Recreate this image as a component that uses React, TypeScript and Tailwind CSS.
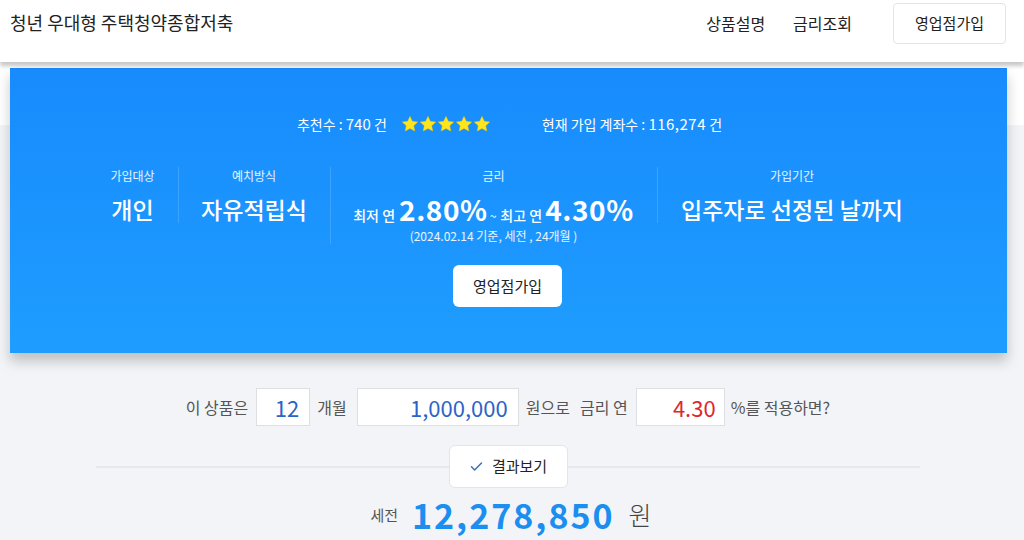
import React from "react";

function Star() {
  return (
    <svg viewBox="0 0 24 24" className="w-[18px] h-[18px]">
      <path
        d="M12 1.8l3.1 6.6 7.2.9-5.3 5 1.4 7.1L12 17.9l-6.4 3.5L7 14.3l-5.3-5 7.2-.9z"
        fill="#ffe61c"
        stroke="#f2c200"
        strokeWidth="0.6"
      />
    </svg>
  );
}

function App() {
  return (
    <div className="min-h-screen bg-[linear-gradient(to_bottom,#ffffff_125px,#f2f4f7_125px)] font-['Noto_Sans_CJK_KR','Noto_Sans',sans-serif] overflow-hidden">
      <header className="relative z-10 h-[62px] bg-white shadow-[0_4px_4px_rgba(0,0,0,0.22)]">
        <div className="flex items-center justify-between h-[45px] pl-[10px] pr-[18px]">
          <h1 className="text-[18px] text-[#222]">청년 우대형 주택청약종합저축</h1>
          <nav className="flex items-center">
            <a className="text-[16px] text-[#222] mr-[28px]">상품설명</a>
            <a className="text-[16px] text-[#222] mr-[41px]">금리조회</a>
            <button className="h-[41px] w-[113px] mt-[1px] border border-[#e4e4e4] rounded bg-white text-[15px] text-[#222]">
              영업점가입
            </button>
          </nav>
        </div>
      </header>

      <section className="ml-[10px] mt-[6px] w-[997px] bg-gradient-to-b from-[#188bfd] to-[#1f9dff] pt-[46px] pb-[46px] text-white shadow-[0_8px_12px_rgba(0,0,0,0.22)]">
        <div className="flex items-center justify-center h-[20px] text-[14px] pl-[2px]">
          <span>
            추천수 : <span className="text-[15px]">740</span> 건
          </span>
          <span className="flex ml-[14px]">
            <Star />
            <Star />
            <Star />
            <Star />
            <Star />
          </span>
          <span className="ml-[51px]">
            현재 가입 계좌수 : <span className="text-[15px] tracking-[0.5px]">116,274</span> 건
          </span>
        </div>

        <div className="flex justify-center mt-[33px] pr-[3px]">
          <div className="w-[90px] flex flex-col items-center">
            <span className="text-[12px] leading-[18px] text-white/90">가입대상</span>
            <span className="text-[23px] leading-[28px] font-medium mt-[10px]">개인</span>
          </div>
          <div className="w-[152px] flex flex-col items-center border-l border-white/15 h-[56px]">
            <span className="text-[12px] leading-[18px] text-white/90">예치방식</span>
            <span className="text-[23px] leading-[28px] font-medium mt-[10px]">자유적립식</span>
          </div>
          <div className="w-[327px] flex flex-col items-center border-l border-white/15">
            <span className="text-[12px] leading-[18px] text-white/90">금리</span>
            <div className="flex items-baseline h-[28px] mt-[10px] leading-[28px]">
              <span className="text-[14px] font-medium">최저 연</span>
              <span className="text-[28px] font-bold ml-[4px] tracking-[0.6px]">2.80%</span>
              <span className="text-[12px] ml-[2px]">~</span>
              <span className="text-[14px] font-medium ml-[4px]">최고 연</span>
              <span className="text-[28px] font-bold ml-[3px] tracking-[0.6px]">4.30%</span>
            </div>
            <span className="text-[12px] leading-[16px] mt-[5px] text-white/90">
              (2024.02.14 기준, 세전 , 24개월 )
            </span>
          </div>
          <div className="w-[270px] flex flex-col items-center border-l border-white/15 h-[56px]">
            <span className="text-[12px] leading-[18px] text-white/90">가입기간</span>
            <span className="text-[23px] leading-[28px] font-medium mt-[10px]">입주자로 선정된 날까지</span>
          </div>
        </div>

        <div className="flex justify-center mt-[21px] pr-[2px]">
          <button className="h-[42px] w-[109px] rounded-md bg-white text-[15px] text-[#222]">
            영업점가입
          </button>
        </div>
      </section>

      <div className="flex items-center justify-center mt-[35px] text-[16px] text-[#555] pr-[8px]">
        <span>이 상품은</span>
        <div className="ml-[8px] w-[54px] h-[38px] bg-white border border-[#dddfe3] flex items-center justify-end pr-[10px] text-[22px] text-[#2c63c6]">
          12
        </div>
        <span className="ml-[7px]">개월</span>
        <div className="ml-[10px] w-[162px] h-[38px] bg-white border border-[#dddfe3] flex items-center justify-end pr-[10px] text-[22px] text-[#2c63c6]">
          1,000,000
        </div>
        <span className="ml-[7px]">원으로</span>
        <span className="ml-[10px]">금리 연</span>
        <div className="ml-[8px] w-[89px] h-[38px] bg-white border border-[#dddfe3] flex items-center justify-end pr-[8px] text-[22px] text-[#e0262b]">
          4.30
        </div>
        <span className="ml-[6px]">%를 적용하면?</span>
      </div>

      <div className="flex items-center ml-[96px] w-[824px] mt-[19px]">
        <div className="flex-1 h-[2px] bg-[#e5e8ec]" />
        <button className="flex items-center justify-center gap-[8px] w-[119px] h-[43px] bg-white border border-[#e2e5ea] rounded-md text-[15px] text-[#222]">
          <svg viewBox="0 0 24 24" className="w-[15px] h-[15px]" fill="none" stroke="#3a6fb5" strokeWidth="2.4" strokeLinecap="round" strokeLinejoin="round">
            <path d="M4 12.5l5 5L20 6.5" />
          </svg>
          결과보기
        </button>
        <div className="flex-1 h-[2px] bg-[#e5e8ec]" />
      </div>

      <div className="flex items-center justify-center h-[48px] mt-[3px] pr-[2px]">
        <span className="text-[15px] text-[#555]">세전</span>
        <span className="ml-[14px] text-[34px] leading-[48px] font-semibold tracking-[2px] text-[#1b8ef0]">12,278,850</span>
        <span className="ml-[14px] text-[25px] font-light text-[#444]">원</span>
      </div>
    </div>
  );
}

export default App;
